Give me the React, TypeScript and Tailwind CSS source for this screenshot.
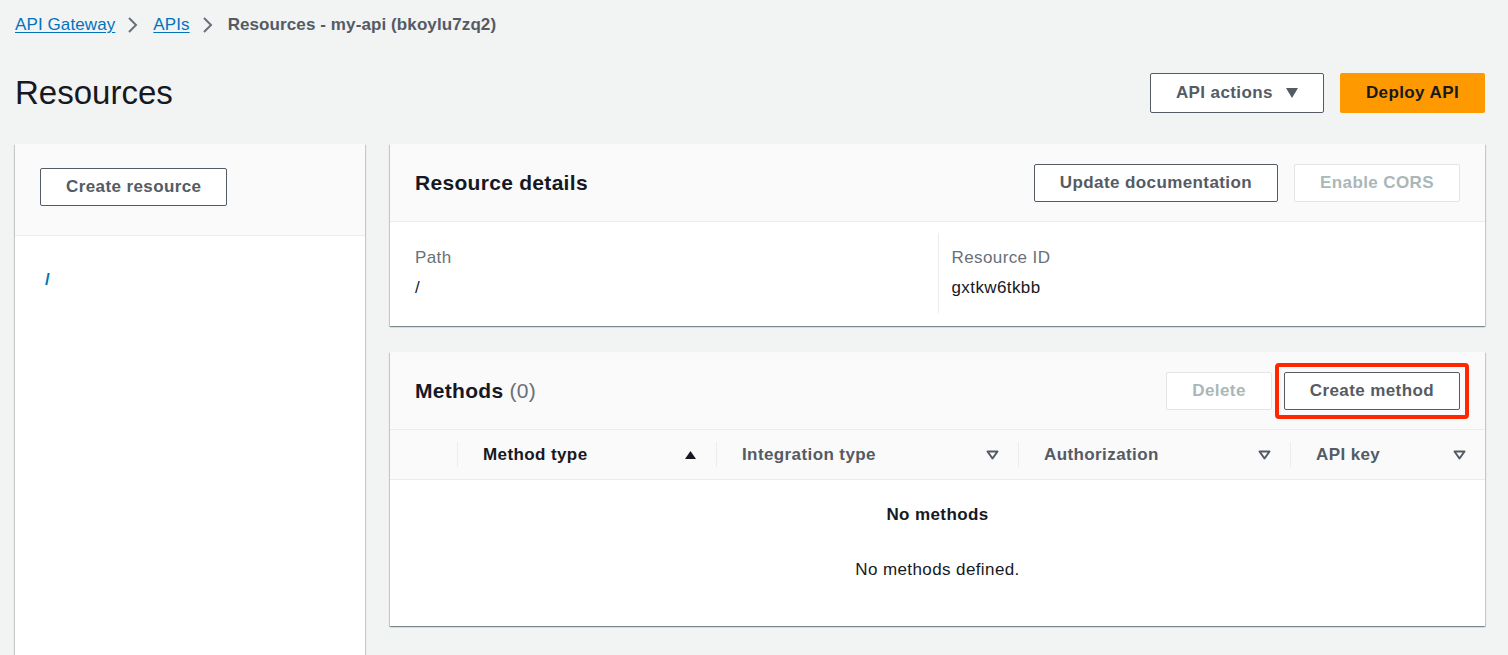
import React from 'react';

const cardShadow =
  'shadow-[0_1px_1px_0_rgba(0,28,36,0.3),1px_1px_1px_0_rgba(0,28,36,0.15),-1px_1px_1px_0_rgba(0,28,36,0.15)]';

function Chevron() {
  return (
    <svg width="16" height="16" viewBox="0 0 16 16" className="ml-[10px] mr-[12px]">
      <path d="M4 1l7 7-7 7" fill="none" stroke="#687078" strokeWidth="2" />
    </svg>
  );
}

function SortDown() {
  return (
    <svg width="13" height="10" viewBox="0 0 13 10">
      <path d="M1.5 1.5h10L6.5 8.5z" fill="none" stroke="#545b64" strokeWidth="2" strokeLinejoin="round" />
    </svg>
  );
}

function SortUp() {
  return (
    <svg width="13" height="10" viewBox="0 0 13 10">
      <path d="M1 9h11L6.5 1z" fill="#16191f" />
    </svg>
  );
}

function Button({ children, disabled }: { children: React.ReactNode; disabled?: boolean }) {
  return (
    <button
      className={
        disabled
          ? 'h-[38px] rounded-[2px] border border-[#e2e6e6] bg-white px-[25px] text-[17px] font-bold text-[#aab7b8]'
          : 'h-[38px] rounded-[2px] border border-[#545b64] bg-white px-[25px] text-[17px] font-bold text-[#545b64]'
      }
    >
      {children}
    </button>
  );
}

function HeaderCell({ label, width, active }: { label: string; width?: string; active?: boolean }) {
  return (
    <div className={`flex h-full items-center ${width ?? 'flex-1'}`}>
      <span className="h-[25px] w-px bg-[#eaeded]" />
      <div className="flex flex-1 items-center justify-between pl-[25px] pr-[19px]">
        <span className={active ? 'text-[#16191f]' : 'text-[#545b64]'}>{label}</span>
        {active ? <SortUp /> : <SortDown />}
      </div>
    </div>
  );
}

export default function App() {
  return (
    <div className="min-h-screen bg-[#f2f3f3] pl-[15px] pr-[23px] font-['Liberation_Sans',Arial,sans-serif] text-[17px] tracking-[0.4px] text-[#16191f]">
      <nav className="flex h-[50px] items-center tracking-[0.1px]">
        <a className="text-[#0073bb] underline underline-offset-2">API Gateway</a>
        <Chevron />
        <a className="text-[#0073bb] underline underline-offset-2">APIs</a>
        <Chevron />
        <span className="font-bold text-[#545b64]">Resources - my-api (bkoylu7zq2)</span>
      </nav>

      <div className="mt-[23px] flex h-[40px] items-center justify-between">
        <h1 className="text-[33px] leading-[40px] tracking-normal">Resources</h1>
        <div className="flex gap-[16px]">
          <button className="flex h-[40px] items-center gap-[13px] rounded-[2px] border border-[#545b64] bg-white px-[25px] font-bold text-[#545b64]">
            API actions
            <svg width="12" height="10" viewBox="0 0 12 10">
              <path d="M0 0h12L6 10z" fill="#545b64" />
            </svg>
          </button>
          <button className="h-[40px] rounded-[2px] bg-[#ff9900] px-[26px] font-bold text-[#16191f]">Deploy API</button>
        </div>
      </div>

      <div className="mt-[31px] flex gap-[25px]">
        <aside className={`h-[520px] w-[350px] shrink-0 bg-white ${cardShadow}`}>
          <div className="h-[92px] border-b border-[#eaeded] bg-[#fafafa] pl-[25px] pt-[24px]">
            <Button>Create resource</Button>
          </div>
          <div className="pl-[30px] pt-[32px] font-bold leading-[24px] text-[#0073bb]">/</div>
        </aside>

        <main className="flex flex-1 flex-col gap-[26px]">
          <section className={`bg-white ${cardShadow}`}>
            <div className="flex h-[78px] items-center justify-between border-b border-[#eaeded] bg-[#fafafa] px-[25px]">
              <h2 className="text-[21px] font-bold tracking-[0.3px]">Resource details</h2>
              <div className="flex gap-[16px]">
                <Button>Update documentation</Button>
                <Button disabled>Enable CORS</Button>
              </div>
            </div>
            <div className="grid grid-cols-2 px-[25px] pb-[13px] pt-[11px] leading-[24px]">
              <div className="py-[13px]">
                <div className="text-[#687078]">Path</div>
                <div className="mt-[6px]">/</div>
              </div>
              <div className="border-l border-[#eaeded] py-[13px] pl-[13px]">
                <div className="text-[#687078]">Resource ID</div>
                <div className="mt-[6px]">gxtkw6tkbb</div>
              </div>
            </div>
          </section>

          <section className={`bg-white ${cardShadow}`}>
            <div className="flex h-[78px] items-center justify-between border-b border-[#eaeded] bg-[#fafafa] px-[25px]">
              <h2 className="text-[21px] font-bold tracking-[0.3px]">
                Methods <span className="font-normal text-[#687078]">(0)</span>
              </h2>
              <div className="flex gap-[12px]">
                <Button disabled>Delete</Button>
                <div className="relative">
                  <Button>Create method</Button>
                  <div className="pointer-events-none absolute -inset-[9px] rounded-[4px] border-4 border-[#ff2600]" />
                </div>
              </div>
            </div>
            <div className="flex h-[50px] items-center border-b border-[#eaeded] bg-[#fafafa] font-bold">
              <div className="w-[67px]" />
              <HeaderCell label="Method type" width="w-[259px]" active />
              <HeaderCell label="Integration type" width="w-[302px]" />
              <HeaderCell label="Authorization" width="w-[272px]" />
              <HeaderCell label="API key" />
            </div>
            <div className="pb-[44px] pt-[23px] text-center leading-[24px]">
              <div className="font-bold">No methods</div>
              <div className="mt-[31px]">No methods defined.</div>
            </div>
          </section>
        </main>
      </div>
    </div>
  );
}
